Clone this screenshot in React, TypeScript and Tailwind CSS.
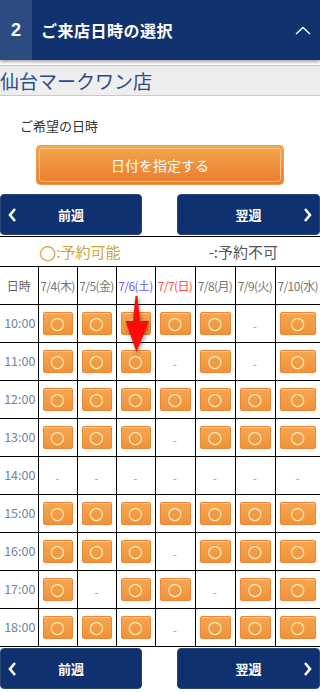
import React from 'react';

const dates = [
  { label: '7/4(木)', color: 'text-[#777]' },
  { label: '7/5(金)', color: 'text-[#777]' },
  { label: '7/6(土)', color: 'text-[#6a5cff]' },
  { label: '7/7(日)', color: 'text-[#ff4b4b]' },
  { label: '7/8(月)', color: 'text-[#777]' },
  { label: '7/9(火)', color: 'text-[#777]' },
  { label: '7/10(水)', color: 'text-[#777]' },
];

// 1 = 予約可能, 0 = 予約不可
const slots: [string, number[]][] = [
  ['10:00', [1, 1, 1, 1, 1, 0, 1]],
  ['11:00', [1, 1, 1, 0, 1, 0, 1]],
  ['12:00', [1, 1, 1, 1, 1, 1, 1]],
  ['13:00', [1, 1, 1, 0, 1, 1, 1]],
  ['14:00', [0, 0, 0, 0, 0, 0, 0]],
  ['15:00', [1, 1, 1, 1, 1, 1, 1]],
  ['16:00', [1, 1, 1, 0, 1, 1, 1]],
  ['17:00', [1, 0, 1, 1, 0, 1, 1]],
  ['18:00', [1, 1, 1, 0, 1, 1, 1]],
];

const font = { fontFamily: '"Noto Sans CJK JP", "Noto Sans", sans-serif' };
const round = { fontFamily: '"DejaVu Sans", sans-serif' };

const WeekNav: React.FC = () => (
  <div className="flex justify-between">
    <button className="flex h-[41px] w-[142px] items-center rounded-[4px] border border-[#2a4578] bg-[#10316f] text-white">
      <svg width="10" height="16" viewBox="0 0 10 16" className="ml-[6px]">
        <path d="M8 2 L3 8 L8 14" fill="none" stroke="white" strokeWidth="2.6" />
      </svg>
      <span className="flex-1 pr-[16px] text-center text-[13px] font-bold">前週</span>
    </button>
    <button className="flex h-[41px] w-[143px] items-center rounded-[4px] border border-[#2a4578] bg-[#10316f] text-white">
      <span className="flex-1 pl-[16px] text-center text-[13px] font-bold">翌週</span>
      <svg width="10" height="16" viewBox="0 0 10 16" className="mr-[6px]">
        <path d="M2 2 L7 8 L2 14" fill="none" stroke="white" strokeWidth="2.6" />
      </svg>
    </button>
  </div>
);

export default function App() {
  return (
    <div className="w-[320px] bg-white" style={font}>
      {/* heading */}
      <div className="relative z-10 flex h-[60px] items-stretch bg-[#11326f] text-white shadow-[0_2px_3px_rgba(0,0,0,0.35)]">
        <div className="flex w-[32px] items-center justify-center bg-[#2c4b81] text-[18px] font-bold" style={{ fontFamily: '"Liberation Sans", sans-serif' }}>
          2
        </div>
        <div className="flex flex-1 items-center pl-[9px] text-[16px] font-bold tracking-[0.5px]">ご来店日時の選択</div>
        <div className="flex items-center pr-[9px]">
          <svg width="16" height="9" viewBox="0 0 16 9">
            <path d="M1 8 L8 1.5 L15 8" fill="none" stroke="white" strokeWidth="1.4" />
          </svg>
        </div>
      </div>

      {/* shop */}
      <div className="mt-[5px] flex h-[31px] items-center border-y border-[#c8c8c8] bg-[#eeeeee] text-[19px] leading-none text-[#2a4a8e]">
        仙台マークワン店
      </div>

      <div className="pl-[20px] pt-[21px] text-[13px] leading-[18px] text-[#333]">ご希望の日時</div>

      <div className="mt-[10px] flex justify-center">
        <button className="h-[40px] w-[248px] rounded-[4px] border border-[#f29c4a] bg-gradient-to-b from-[#f5a649] to-[#ea7a2f] p-[2px] text-white">
          <div className="flex h-full items-center justify-center rounded-[3px] border border-[#f8c48e] text-[14px]">
            日付を指定する
          </div>
        </button>
      </div>

      <div className="mt-[9px]">
        <WeekNav />
      </div>

      {/* calendar */}
      <div className="relative mt-px">
        <table className="w-full table-fixed border-collapse border-t border-black">
          <colgroup>
            <col className="w-[38px]" />
            <col className="w-[39px]" />
            <col className="w-[39px]" />
            <col className="w-[39px]" />
            <col className="w-[40px]" />
            <col className="w-[40px]" />
            <col className="w-[40px]" />
            <col />
          </colgroup>
          <tbody>
            <tr className="h-[30px] border-b border-black">
              <td colSpan={8} className="p-0">
                <div className="flex items-center text-[15px] leading-none">
                  <span className="ml-[39px] flex items-center text-[#c9a640]">
                    <span className="text-[20px] leading-none" style={round}>○</span>:予約可能
                  </span>
                  <span className="ml-[88px] text-[#555]">-:予約不可</span>
                </div>
              </td>
            </tr>
            <tr className="h-[38px] border-b border-black">
              <td className="p-0 text-center text-[12px] text-[#666]">日時</td>
              {dates.map((d) => (
                <td key={d.label} className={`border-l border-black p-0 text-center text-[12px] tracking-[-0.6px] whitespace-nowrap ${d.color}`}>
                  {d.label}
                </td>
              ))}
            </tr>
            {slots.map(([time, row]) => (
              <tr key={time} className="h-[38px] border-b border-black">
                <td className="p-0 pl-[2px] text-center text-[12.5px] text-[#7382a0]">{time}</td>
                {row.map((ok, i) => (
                  <td key={i} className="border-l border-black px-[4px] py-0 text-center">
                    {ok ? (
                      <div
                        className="flex h-[23px] items-center justify-center rounded-[2px] border border-[#ec8737] bg-gradient-to-b from-[#f6a652] to-[#f09238] shadow-[inset_0_1px_0_#f9c083] text-[17px] leading-none text-[#fff4bf]"
                        style={round}
                      >
                        ○
                      </div>
                    ) : (
                      <span className="text-[11px] text-[#999]">-</span>
                    )}
                  </td>
                ))}
              </tr>
            ))}
          </tbody>
        </table>

        {/* pointer */}
        <svg
          width="30"
          height="62"
          viewBox="0 0 30 62"
          className="absolute left-[122px] top-[57px] drop-shadow-[1px_2px_2px_rgba(0,0,0,0.45)]"
        >
          <path d="M13.5 3 L15.5 3 L18 28 L27 28 L14.5 59 L3.5 28 L11 28 Z" fill="#ff0a0a" />
        </svg>
      </div>

      <div className="mt-px">
        <WeekNav />
      </div>
    </div>
  );
}
